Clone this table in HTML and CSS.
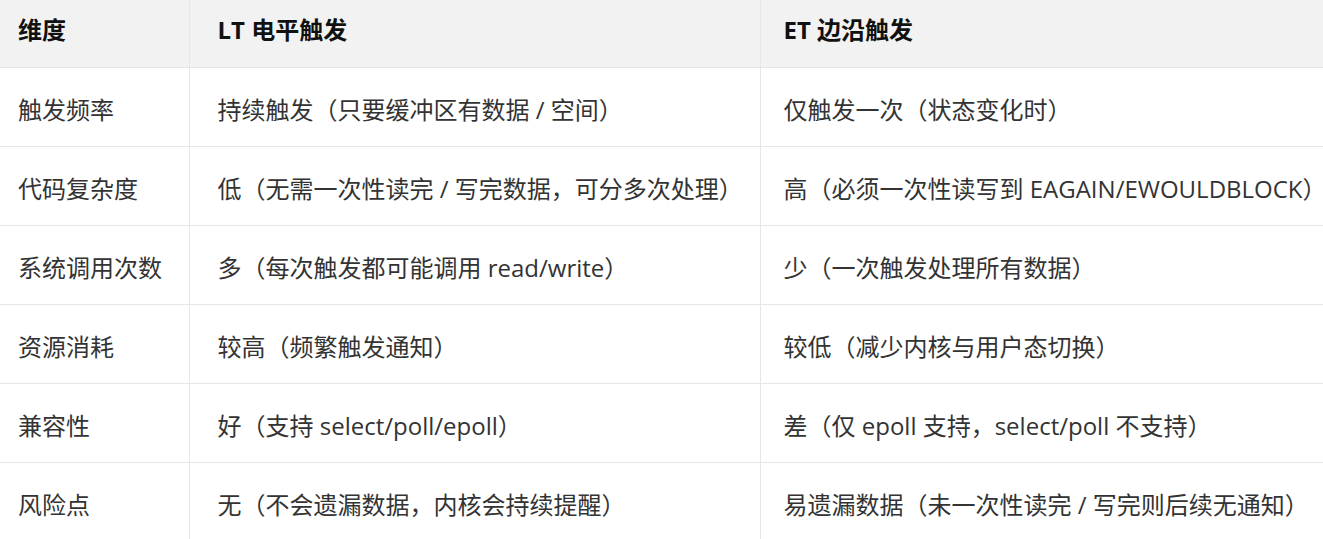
FILE: index.html
```html
<!DOCTYPE html>
<html lang="zh-CN">
<head>
<meta charset="utf-8">
<title>LT vs ET</title>
<link rel="stylesheet" href="styles.css">
</head>
<body>
<table class="cmp">
  <colgroup>
    <col class="c1">
    <col class="c2">
    <col class="c3">
  </colgroup>
  <thead>
    <tr>
      <th class="k">维度</th>
      <th class="lt">LT 电平触发</th>
      <th class="et">ET 边沿触发</th>
    </tr>
  </thead>
  <tbody>
    <tr>
      <td class="k">触发频率</td>
      <td class="lt">持续触发（只要缓冲区有数据 / 空间）</td>
      <td class="et">仅触发一次（状态变化时）</td>
    </tr>
    <tr>
      <td class="k">代码复杂度</td>
      <td class="lt">低（无需一次性读完 / 写完数据，可分多次处理）</td>
      <td class="et">高（必须一次性读写到 EAGAIN/EWOULDBLOCK）</td>
    </tr>
    <tr>
      <td class="k">系统调用次数</td>
      <td class="lt">多（每次触发都可能调用 read/write）</td>
      <td class="et">少（一次触发处理所有数据）</td>
    </tr>
    <tr>
      <td class="k">资源消耗</td>
      <td class="lt">较高（频繁触发通知）</td>
      <td class="et">较低（减少内核与用户态切换）</td>
    </tr>
    <tr>
      <td class="k">兼容性</td>
      <td class="lt">好（支持 select/poll/epoll）</td>
      <td class="et">差（仅 epoll 支持，select/poll 不支持）</td>
    </tr>
    <tr>
      <td class="k">风险点</td>
      <td class="lt">无（不会遗漏数据，内核会持续提醒）</td>
      <td class="et">易遗漏数据（未一次性读完 / 写完则后续无通知）</td>
    </tr>
  </tbody>
</table>
</body>
</html>
```

FILE: styles.css
```css
html, body {
  margin: 0;
  padding: 0;
  background: #ffffff;
  overflow: hidden;
}

.cmp {
  border-collapse: collapse;
  table-layout: fixed;
  width: 1323px;
  font-family: "Open Sans", "Noto Sans CJK SC", sans-serif;
  font-size: 24px;
  color: #333333;
}

.c1 { width: 189px; }
.c2 { width: 571px; }
.c3 { width: 563px; }

.cmp th,
.cmp td {
  text-align: left;
  vertical-align: middle;
  border-bottom: 1px solid #e6e6e6;
  border-right: 1px solid #e6e6e6;
  white-space: nowrap;
  padding: 0;
}

.cmp .et {
  border-right: none;
}

.cmp th {
  height: 57px;
  padding-bottom: 10px;
  background: #f2f2f2;
  font-weight: 700;
  color: #111111;
}

.cmp td {
  height: 76px;
  padding-top: 2px;
}

.cmp .k { padding-left: 18px; }
.cmp .lt { padding-left: 28px; }
.cmp .et { padding-left: 23px; padding-right: 0; }
```
